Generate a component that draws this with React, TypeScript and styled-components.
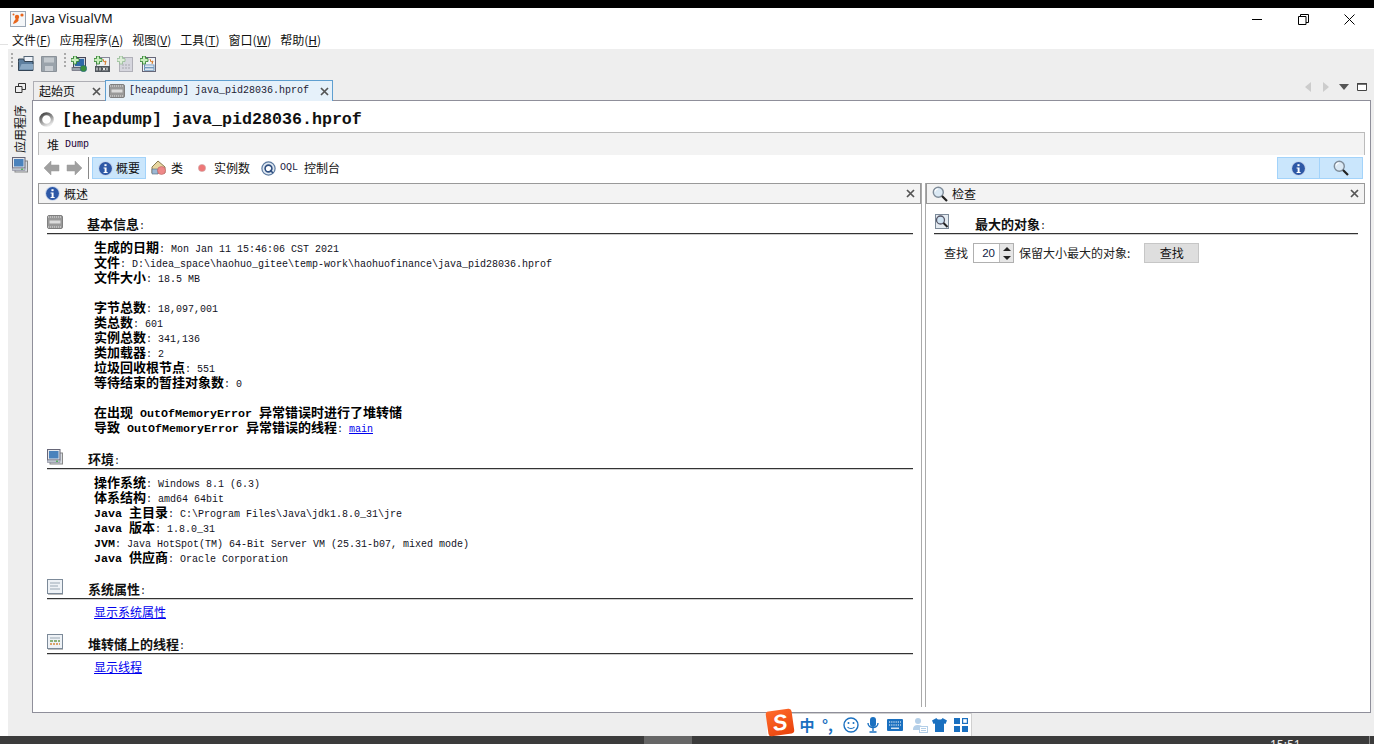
import React from "react";
import styled, { createGlobalStyle } from "styled-components";

const Global = createGlobalStyle`
  html, body { margin: 0; padding: 0; background: #fff; }
  body { font-family: "Noto Sans CJK SC", "Noto Sans", sans-serif; color: #000; }
  * { box-sizing: border-box; }
`;

const CJK = `"Noto Sans CJK SC", "Noto Sans", sans-serif`;
const MONO = `"Liberation Mono", "Noto Sans CJK SC", monospace`;

const Screen = styled.div`
  width: 1374px; height: 744px; position: relative; overflow: hidden;
  display: flex; flex-direction: column; background: #fff;
`;
const TopBlack = styled.div`height: 8px; background: #000; flex: none;`;
const Middle = styled.div`flex: 1; display: flex; min-height: 0;`;
const Gutter = styled.div`
  width: 8px; flex: none;
  background: linear-gradient(#fff 36px, #e2e2e2 36px, #e2e2e2 37px, #fff 37px);
`;
const AppCol = styled.div`flex: 1; display: flex; flex-direction: column; min-width: 0;`;

const TitleBar = styled.div`
  height: 22px; flex: none; background: #fff; display: flex; align-items: center;
  padding-left: 2px;
`;
const TitleText = styled.span`
  font: 12.6px "Noto Sans", sans-serif; margin-left: 5px; color: #111; line-height: 20px; letter-spacing: 0.05px;
`;
const WinButtons = styled.div`
  margin-left: auto; display: flex; gap: 35px; padding-right: 19px; align-items: center;
`;
const MenuBar = styled.div`
  height: 19px; flex: none; background: #fff; display: flex; gap: 9px; padding-left: 4px; align-items: center;
  font: 12px/19px ${CJK}; color: #111;
`;
const Mnemonic = styled.span`text-decoration: underline;`;
const Toolbar = styled.div`
  height: 31px; flex: none; background: #eee; display: flex; align-items: flex-start; padding: 4px 0 0 3px;
`;
const Grip = styled.div<{ $ml?: number }>`
  width: 2px; height: 16px; margin-left: ${(p) => p.$ml ?? 0}px;
  background: repeating-linear-gradient(#aaa 0 2px, transparent 2px 4px);
`;
const ToolIcon = styled.div<{ $ml: number }>`
  width: 16px; height: 16px; margin-left: ${(p) => p.$ml}px; flex: none;
`;

const Workspace = styled.div`
  flex: 1; display: flex; min-height: 0; background: #eee; padding: 0 3px 23px 0;
`;
const Sidebar = styled.div`
  width: 24px; flex: none; display: flex; flex-direction: column; align-items: center; padding-top: 3px;
`;
const SideLabel = styled.div`
  writing-mode: vertical-rl; text-orientation: sideways; transform: rotate(180deg);
  font: 12px/14px ${CJK}; margin-top: 10px; height: 50px; color: #111;
`;
const SideIcon = styled.div`margin-top: 1px; height: 16px;`;

const MainCol = styled.div`flex: 1; display: flex; flex-direction: column; min-width: 0;`;
const TabStrip = styled.div`height: 20px; flex: none; display: flex; align-items: flex-end; position: relative; z-index: 1;`;
const Tab = styled.div<{ $active?: boolean; $w: number }>`
  width: ${(p) => p.$w}px; height: ${(p) => (p.$active ? 21 : 19)}px;
  margin-bottom: ${(p) => (p.$active ? -1 : 0)}px;
  margin-left: ${(p) => (p.$active ? 0 : 1)}px;
  display: flex; align-items: center; flex: none;
  background: ${(p) => (p.$active ? "#e6f1fa" : "#eee")};
  border: 1px solid ${(p) => (p.$active ? "#5f9fd0" : "#aeaeb4")};
  border-bottom: ${(p) => (p.$active ? "none" : "0")};
  border-right: ${(p) => (p.$active ? "" : "none")};
  padding-left: ${(p) => (p.$active ? 3 : 5)}px;
`;
const TabCJK = styled.span`font: 12px/18px ${CJK}; color: #111;`;
const TabMono = styled.span`font: 10px/18px ${MONO}; margin-left: 4px; color: #223; white-space: pre;`;
const TabClose = styled.div<{ $mr: number }>`margin-left: auto; margin-right: ${(p) => p.$mr}px; width: 9px; height: 9px; display: flex;`;
const StripControls = styled.div`
  margin-left: auto; display: flex; align-items: center; height: 20px; padding-bottom: 7px;
`;
const Frame = styled.div`
  flex: 1; min-height: 0; background: #fff; border: 1px solid #8f8f9a;
  padding: 0 5px 5px; display: flex; flex-direction: column;
`;
const DocTitle = styled.div`
  height: 31px; flex: none; display: flex; align-items: center; padding: 6px 0 0 1px;
`;
const DocTitleText = styled.span`
  font: bold 16.67px/24px ${MONO}; margin-left: 8px; white-space: pre; color: #111;
`;
const SubBar = styled.div`
  height: 23px; flex: none; background: #f3f3f3; border: 1px solid #bbb; border-bottom: none;
  display: flex; align-items: center; padding: 1px 0 0 8px;
`;
const SubCJK = styled.span`font: 12px/20px ${CJK}; color: #111;`;
const SubMono = styled.span`font: 10px/20px ${MONO}; margin-left: 6px; color: #203;`;
const ViewBar = styled.div`
  height: 27px; flex: none; display: flex; align-items: flex-start; padding: 2px 2px 0 5px; background: #fff;
`;
const NavItem = styled.div<{ $ml?: number; $on?: boolean }>`
  height: 22px; display: flex; align-items: center; flex: none; margin-left: ${(p) => p.$ml ?? 0}px;
  ${(p) => p.$on ? "background:#cae6fc; border:1px solid #a3d3fa; padding:0 5px;" : ""}
`;
const NavSep = styled.div`width: 1px; height: 22px; background: #888; margin-left: 5px;`;
const NavText = styled.span<{ $ml?: number }>`
  font: 12px/22px ${CJK}; margin-left: ${(p) => p.$ml ?? 4}px; color: #111; white-space: pre;
`;
const NavMono = styled.span`font: 10px/22px ${MONO}; margin-left: 4px; color: #224;`;
const RightGroup = styled.div`margin-left: auto; display: flex;`;
const ToggleBtn = styled.div`
  width: 43px; height: 22px; background: #cae6fc; border: 1px solid #a3d3fa;
  display: flex; align-items: center; justify-content: center;
  & + & { border-left: none; }
`;
const Panels = styled.div`flex: 1; min-height: 0; display: flex; gap: 3px; padding-top: 1px;`;
const Panel = styled.div<{ $w: number; $side: "left" | "right" }>`
  width: ${(p) => p.$w}px; flex: none; display: flex; flex-direction: column;
  ${(p) => p.$side === "left" ? "border-right:1px solid #aaa;" : "border-left:1px solid #aaa;"}
`;
const PanelHead = styled.div<{ $pl: number }>`
  height: 21px; flex: none; display: flex; align-items: center; background: #f3f3f3;
  border: 1px solid #999; padding-left: ${(p) => p.$pl}px; padding-right: 5px;
`;
const PanelTitle = styled.span`font: 12px/18px ${CJK}; margin-left: 4px; color: #111;`;
const PanelClose = styled.div`margin-left: auto; display: flex;`;
const PanelBody = styled.div<{ $pl: number; $pr: number }>`
  flex: 1; padding: 10px ${(p) => p.$pr}px 0 ${(p) => p.$pl}px;
  display: flex; flex-direction: column; gap: 13px;
`;
const Section = styled.section``;
const SectionHead = styled.div<{ $gap: number }>`
  height: 20px; display: flex; border-bottom: 1px solid #333; box-shadow: 0 1px 0 #d0d0d0; align-items: flex-start;
  & > svg { flex: none; margin-right: ${(p) => p.$gap}px; }
`;
const HeadText = styled.span`
  font: bold 13px/20px ${CJK}; color: #111; white-space: pre;
`;
const HeadColon = styled.span`font: 10px/20px ${MONO};`;
const SectionBody = styled.div`padding: 5px 0 2px 47px;`;
const Line = styled.div`
  height: 15px; font: 10px/15px ${MONO}; white-space: pre; color: #112;
  &::before { content: "\\200b"; font: bold 13px/15px ${CJK}; }
`;
const Cjk = styled.b`display: inline-block; height: 15px; font: bold 13px/15px ${CJK}; color: #000;`;
const Bl = styled.b`display: inline-block; height: 15px; font: bold 11.67px/15px ${MONO}; color: #000;`;
const Link = styled.a`color: #00e; text-decoration: underline; cursor: pointer;`;
const LinkCjk = styled.span`font: 12px/15px ${CJK};`;
const FindRow = styled.div`
  display: flex; align-items: center; height: 20px; margin-top: 9px; padding-left: 10px;
  font: 12px/20px ${CJK}; color: #222; white-space: pre;
`;
const SpinBox = styled.div`
  width: 41px; height: 20px; margin: 0 5px; border: 1px solid #b0b0b0; background: #fff;
  display: flex; align-items: center; justify-content: flex-end;
`;
const SpinVal = styled.span`font: 11.5px/18px "Liberation Sans", sans-serif; color: #124; margin-right: 4px;`;
const SpinArrows = styled.div`
  width: 14px; height: 18px; background: #e6e6e6; display: flex; flex-direction: column; align-items: center;
  justify-content: space-around; border-left: 1px solid #bbb;
`;
const FindBtn = styled.div`
  width: 55px; height: 20px; margin-left: 14px; background: #dedede; border: 1px solid #c6c6c6;
  text-align: center; font: 12px/18px ${CJK}; color: #111;
`;

const ImeBar = styled.div`
  position: absolute; left: 767px; top: 713px; width: 205px; height: 23px; background: #fff;
  border: 1px solid #d0d0d0; border-left: none; border-bottom: none;
  display: flex; align-items: center; padding-left: 29px;
`;
const ImeLogo = styled.div`
  position: absolute; left: 0; top: -4px; width: 26px; height: 25px; background: linear-gradient(160deg,#ff6a2a,#e8420c);
  border-radius: 3px; transform: rotate(-8deg); color: #fff; text-align: center;
  font: italic 900 22px/25px "Liberation Sans", sans-serif;
`;
const ImeText = styled.span<{ $w: number }>`
  width: ${(p) => p.$w}px; flex: none; text-align: center; color: #1a70c0; font: bold 15px/20px ${CJK};
`;
const ImeIcon = styled.div<{ $w: number }>`
  width: ${(p) => p.$w}px; flex: none; display: flex; justify-content: center; align-items: center;
`;

const Taskbar = styled.div`
  height: 8px; flex: none; background: #3b3b3b; display: flex; overflow: hidden;
`;
const TaskHi = styled.div`width: 48px; background: #666; margin-left: 644px;`;
const Clock = styled.div`
  margin-left: 578px; font: 12px/12px "Noto Sans", sans-serif; color: #eee; padding-top: 3px; width: 100px; height: 8px;
  border-right: 1px solid #888;
`;

const Info = ({ s = 14 }: { s?: number }) => (
  <svg width={s} height={s} viewBox="0 0 14 14">
    <circle cx="7" cy="7" r="6.8" fill="#c4d2ea" />
    <circle cx="7" cy="7" r="6" fill="#2d58a6" />
    <rect x="6" y="3" width="2" height="1.8" fill="#fff" />
    <path d="M5.2 6h2.8v4.2h1v1H5.2v-1h1V7H5.2z" fill="#fff" />
  </svg>
);
const Mag = ({ s = 16 }: { s?: number }) => (
  <svg width={s} height={s} viewBox="0 0 16 16">
    <circle cx="6.3" cy="6.3" r="5" fill="#dbe9f4" stroke="#7f8c99" strokeWidth="1.4" />
    <path d="M2.8 5.5a3.6 3.6 0 0 1 3-2.6" stroke="#fff" strokeWidth="1.2" fill="none" />
    <path d="M10 10l5 5" stroke="#222" strokeWidth="2.2" />
  </svg>
);
const Close = ({ c = "#555", s = 9 }: { c?: string; s?: number }) => (
  <svg width={s} height={s} viewBox="0 0 9 9"><path d="M1 1l7 7M8 1L1 8" stroke={c} strokeWidth="1.7" /></svg>
);
const Chip = ({ s = 16 }: { s?: number }) => (
  <svg width={s} height={s} viewBox="0 0 16 16">
    <rect x="0.5" y="1.5" width="15" height="13" rx="1.5" fill="#999" stroke="#808080" />
    <path d="M1 3h14" stroke="#e4e4e4" strokeDasharray="1 1" />
    <path d="M1 13h14" stroke="#e4e4e4" strokeDasharray="1 1" />
    <rect x="2.5" y="6.5" width="11" height="3" fill="#dcdcdc" />
  </svg>
);
const Monitor = ({ s = 16 }: { s?: number }) => (
  <svg width={s} height={s} viewBox="0 0 16 16">
    <rect x="3" y="4" width="12.5" height="11" fill="#d8dde2" stroke="#888" />
    <rect x="0.5" y="0.5" width="12.5" height="10.5" fill="#e4e7ec" stroke="#667" />
    <rect x="2" y="2" width="9.5" height="7.5" fill="#4a82bc" />
    <rect x="0.5" y="11" width="12.5" height="2.5" fill="#bcc4cc" stroke="#889" strokeWidth=".6" />
    <rect x="9" y="11.7" width="2" height="1" fill="#3a3" />
  </svg>
);
const DocLines = () => (
  <svg width="16" height="16" viewBox="0 0 16 16">
    <rect x=".5" y=".5" width="15" height="14" fill="#eef2f6" stroke="#7c8a99" />
    <path d="M3 4h10M3 7h8M3 10h10" stroke="#9aa8b4" />
    <path d="M1 15.5h15" stroke="#bbb" />
  </svg>
);
const Threads = () => (
  <svg width="16" height="16" viewBox="0 0 16 16">
    <rect x=".5" y=".5" width="15" height="14" fill="#eef2f6" stroke="#7c8a99" />
    <path d="M3 4h10" stroke="#9aa8b4" />
    <path d="M3 7h10" stroke="#6a9a4c" strokeWidth="1.4" strokeDasharray="3 1" />
    <path d="M3 10h10" stroke="#d68a3c" strokeWidth="1.4" strokeDasharray="2 1" />
    <path d="M1 15.5h15" stroke="#bbb" />
  </svg>
);
const MagDoc = () => (
  <svg width="16" height="16" viewBox="0 0 16 16">
    <rect x="1.5" y=".5" width="13" height="14" fill="#e4ebf1" stroke="#7c8a99" />
    <circle cx="6.5" cy="6" r="4" fill="#cfe3f2" stroke="#556" strokeWidth="1.3" />
    <path d="M9.5 9l4 4" stroke="#222" strokeWidth="2" />
  </svg>
);
const Plus = () => (
  <path d="M2.5 0h3v2.5H8v3H5.5V8h-3V5.5H0v-3h2.5z" fill="#c9efbd" stroke="#2a7d2a" strokeWidth=".8" />
);
const T = {
  Open: () => (
    <svg width="16" height="16" viewBox="0 0 16 16">
      <rect x="6" y="0.5" width="9" height="7" fill="#eef2f8" stroke="#567" />
      <path d="M.5 5.5V3h5l1 2.5h8.5v9H.5z" fill="#5d7f9f" stroke="#345" />
      <path d="M1.5 13l2-5h11.5v5.5H1.5z" fill="#8ba9c4" />
    </svg>
  ),
  Save: () => (
    <svg width="16" height="16" viewBox="0 0 16 16">
      <path d="M.5.5h15v15H.5z" fill="#9aa3ab" stroke="#8a9198" />
      <rect x="3" y="1.5" width="10" height="5" fill="#c3c9ce" />
      <rect x="4" y="10" width="8" height="5" fill="#c8cdd2" />
    </svg>
  ),
  App: () => (
    <svg width="16" height="16" viewBox="0 0 16 16">
      <rect x="2.5" y="1.5" width="12" height="10" fill="#c8d2dc" stroke="#445" />
      <rect x="4" y="3" width="9" height="7" fill="#2f6aa8" />
      <rect x="1" y="11.5" width="12" height="3" fill="#9aa3ab" stroke="#556" strokeWidth=".6" />
      <circle cx="12.5" cy="12.5" r="3.2" fill="#3a8f3c" stroke="#1f5f8f" strokeWidth=".6" />
      <Plus />
    </svg>
  ),
  Jmx: () => (
    <svg width="16" height="16" viewBox="0 0 16 16">
      <rect x="2.5" y="1.5" width="13" height="14" fill="#eef1f4" stroke="#889" />
      <path d="M9 3l1 3 2-1-1 4" stroke="#d77a2a" fill="none" />
      <rect x="1" y="10" width="15" height="6" fill="#4f555b" />
      <path d="M3 11.5v3M6 11.5v3M9 11.5l2 3M11 11.5l-2 3M13 11.5v3" stroke="#fff" strokeWidth="1" />
      <Plus />
    </svg>
  ),
  Core: () => (
    <svg width="16" height="16" viewBox="0 0 16 16" opacity=".45">
      <rect x="2.5" y="1.5" width="13" height="14" fill="#bbc" stroke="#667" />
      <path d="M5 9h8M5 12h8" stroke="#556" strokeDasharray="2 1" />
      <Plus />
    </svg>
  ),
  Snap: () => (
    <svg width="16" height="16" viewBox="0 0 16 16">
      <rect x="2.5" y="1.5" width="13" height="14" fill="#f0f3f6" stroke="#667" />
      <path d="M10 3l1 3 2-1-1 3" stroke="#d77a2a" fill="none" />
      <rect x="4.5" y="9" width="9.5" height="2.2" fill="#fff" stroke="#4f7fae" strokeWidth=".8" />
      <rect x="4.5" y="12" width="9.5" height="2.2" fill="#fff" stroke="#4f7fae" strokeWidth=".8" />
      <Plus />
    </svg>
  ),
};

const Tri = ({ d, c, w = 6, h = 10 }: { d: "l" | "r" | "d"; c: string; w?: number; h?: number }) => (
  <svg width={w} height={h} viewBox={`0 0 ${w} ${h}`}>
    <path d={d === "l" ? `M${w} 0V${h}L0 ${h / 2}z` : d === "r" ? `M0 0V${h}L${w} ${h / 2}z` : `M0 0H${w}L${w / 2} ${h}z`} fill={c} />
  </svg>
);
const StripSlot = styled.div<{ $w: number }>`width: ${(p) => p.$w}px; display: flex; justify-content: center; flex: none;`;

const SpinnerIcon = () => (
  <svg width="15" height="15" viewBox="0 0 15 15">
    <defs>
      <linearGradient id="sp" x1="0.2" y1="0" x2="0.7" y2="1">
        <stop offset="0" stopColor="#4c4c4c" />
        <stop offset=".6" stopColor="#a5a5a5" />
        <stop offset="1" stopColor="#e8e8e8" />
      </linearGradient>
    </defs>
    <circle cx="7.5" cy="7.5" r="5.8" fill="none" stroke="url(#sp)" strokeWidth="3" />
  </svg>
);

const NavArrow = ({ flip }: { flip?: boolean }) => (
  <svg width="17" height="16" viewBox="0 0 17 16" style={flip ? { transform: "scaleX(-1)" } : undefined}>
    <path d="M8 1L1 8l7 7v-4h8V5H8z" fill="#a0a0a0" stroke="#999" strokeWidth=".5" />
  </svg>
);

const JavaLogo = () => (
  <svg width="16" height="16" viewBox="0 0 16 16">
    <rect x=".5" y=".5" width="15" height="15" fill="#f4f6f8" stroke="#9aa6b4" />
    <path d="M3 13c1-4 3-6 5-5s-1 4-5 5z" fill="#e8661e" />
    <circle cx="7" cy="6" r="2.2" fill="#e8661e" />
    <circle cx="12" cy="4" r="1.6" fill="#e8661e" />
    <circle cx="3.5" cy="3.5" r="1" fill="#e8661e" />
  </svg>
);

const menu: [string, string][] = [["文件", "F"], ["应用程序", "A"], ["视图", "V"], ["工具", "T"], ["窗口", "W"], ["帮助", "H"]];

export default function App() {
  return (
    <Screen>
      <Global />
      <TopBlack />
      <Middle>
        <Gutter />
        <AppCol>
          <TitleBar>
            <JavaLogo />
            <TitleText>Java VisualVM</TitleText>
            <WinButtons>
              <svg width="11" height="11" viewBox="0 0 11 11"><path d="M0 5.5h10" stroke="#000" /></svg>
              <svg width="11" height="11" viewBox="0 0 11 11"><path d="M.5 2.5h7.5v8H.5zM2.5 2.5v-2h8v8h-2.5" fill="none" stroke="#000" /></svg>
              <svg width="11" height="11" viewBox="0 0 11 11"><path d="M.5.5l10 10M10.5.5l-10 10" stroke="#000" /></svg>
            </WinButtons>
          </TitleBar>
          <MenuBar>
            {menu.map(([a, b]) => (
              <span key={b}>{a}(<Mnemonic>{b}</Mnemonic>)</span>
            ))}
          </MenuBar>
          <Toolbar>
            <Grip />
            <ToolIcon $ml={5}><T.Open /></ToolIcon>
            <ToolIcon $ml={7}><T.Save /></ToolIcon>
            <Grip $ml={7} />
            <ToolIcon $ml={5}><T.App /></ToolIcon>
            <ToolIcon $ml={7}><T.Jmx /></ToolIcon>
            <ToolIcon $ml={7}><T.Core /></ToolIcon>
            <ToolIcon $ml={7}><T.Snap /></ToolIcon>
          </Toolbar>
          <Workspace>
            <Sidebar>
              <svg width="11" height="10" viewBox="0 0 11 10"><path d="M.5 3.5h6.5v6H.5zM3.5 3.5v-3h7v6h-3.5" fill="none" stroke="#333" /></svg>
              <SideLabel>应用程序</SideLabel>
              <SideIcon><Monitor /></SideIcon>
            </Sidebar>
            <MainCol>
              <TabStrip>
                <Tab $w={72}>
                  <TabCJK>起始页</TabCJK>
                  <TabClose $mr={4}><Close /></TabClose>
                </Tab>
                <Tab $active $w={228}>
                  <Chip />
                  <TabMono>[heapdump] java_pid28036.hprof</TabMono>
                  <TabClose $mr={3}><Close /></TabClose>
                </Tab>
                <StripControls>
                  <StripSlot $w={18}><Tri d="l" c="#ccc" /></StripSlot>
                  <StripSlot $w={18}><Tri d="r" c="#ccc" /></StripSlot>
                  <StripSlot $w={18}><Tri d="d" c="#555" w={10} h={6} /></StripSlot>
                  <StripSlot $w={18}>
                    <svg width="10" height="8" viewBox="0 0 10 8"><path d="M.5 .5h9v7h-9z" fill="#fff" stroke="#444" /><path d="M0 1h10" stroke="#444" strokeWidth="1.5" /></svg>
                  </StripSlot>
                </StripControls>
              </TabStrip>
              <Frame>
                <DocTitle>
                  <SpinnerIcon />
                  <DocTitleText>[heapdump] java_pid28036.hprof</DocTitleText>
                </DocTitle>
                <SubBar>
                  <SubCJK>堆</SubCJK>
                  <SubMono>Dump</SubMono>
                </SubBar>
                <ViewBar>
                  <NavItem><NavArrow /></NavItem>
                  <NavItem $ml={6}><NavArrow flip /></NavItem>
                  <NavSep />
                  <NavItem $on $ml={3}><Info s={15} /><NavText $ml={3}>概要</NavText></NavItem>
                  <NavItem $ml={5}>
                    <svg width="16" height="16" viewBox="0 0 16 16">
                      <path d="M1 7l6-6 7 6v6H1z" fill="#e8d6a0" stroke="#8a7a50" />
                      <path d="M1 9h6v5H1z" fill="#9bb8d4" stroke="#567" strokeWidth=".6" />
                      <circle cx="10.5" cy="10.5" r="4" fill="#e88" stroke="#b66" strokeWidth=".6" />
                    </svg>
                    <NavText>类</NavText>
                  </NavItem>
                  <NavItem $ml={15}>
                    <svg width="8" height="8" viewBox="0 0 8 8"><circle cx="4" cy="4" r="3.6" fill="#e77" stroke="#caa" strokeWidth=".6" /></svg>
                    <NavText $ml={8}>实例数</NavText>
                  </NavItem>
                  <NavItem $ml={11}>
                    <svg width="15" height="15" viewBox="0 0 15 15">
                      <circle cx="7.5" cy="7.5" r="6.6" fill="#dfe8f2" stroke="#5c7aa0" strokeWidth="1.2" />
                      <circle cx="7.5" cy="7.5" r="3.4" fill="#fff" stroke="#2f4f80" strokeWidth="1.6" />
                      <path d="M9 9l3 3" stroke="#2f4f80" strokeWidth="1.6" />
                    </svg>
                    <NavMono>OQL</NavMono>
                    <NavText $ml={6}>控制台</NavText>
                  </NavItem>
                  <RightGroup>
                    <ToggleBtn><Info s={15} /></ToggleBtn>
                    <ToggleBtn><Mag /></ToggleBtn>
                  </RightGroup>
                </ViewBar>
                <Panels>
                  <Panel $w={884} $side="left">
                    <PanelHead $pl={6}>
                      <Info s={15} />
                      <PanelTitle>概述</PanelTitle>
                      <PanelClose><Close /></PanelClose>
                    </PanelHead>
                    <PanelBody $pl={9} $pr={8}>
                      <Section>
                        <SectionHead $gap={24}><Chip /><HeadText>基本信息<HeadColon>:</HeadColon></HeadText></SectionHead>
                        <SectionBody>
                          <Line><Cjk>生成的日期</Cjk>: Mon Jan 11 15:46:06 CST 2021</Line>
                          <Line><Cjk>文件</Cjk>: D:\idea_space\haohuo_gitee\temp-work\haohuofinance\java_pid28036.hprof</Line>
                          <Line><Cjk>文件大小</Cjk>: 18.5 MB</Line>
                          <Line />
                          <Line><Cjk>字节总数</Cjk>: 18,097,001</Line>
                          <Line><Cjk>类总数</Cjk>: 601</Line>
                          <Line><Cjk>实例总数</Cjk>: 341,136</Line>
                          <Line><Cjk>类加载器</Cjk>: 2</Line>
                          <Line><Cjk>垃圾回收根节点</Cjk>: 551</Line>
                          <Line><Cjk>等待结束的暂挂对象数</Cjk>: 0</Line>
                          <Line />
                          <Line><Cjk>在出现</Cjk><Bl> OutOfMemoryError </Bl><Cjk>异常错误时进行了堆转储</Cjk></Line>
                          <Line><Cjk>导致</Cjk><Bl> OutOfMemoryError </Bl><Cjk>异常错误的线程</Cjk>: <Link>main</Link></Line>
                        </SectionBody>
                      </Section>
                      <Section>
                        <SectionHead $gap={25}><Monitor /><HeadText>环境<HeadColon>:</HeadColon></HeadText></SectionHead>
                        <SectionBody>
                          <Line><Cjk>操作系统</Cjk>: Windows 8.1 (6.3)</Line>
                          <Line><Cjk>体系结构</Cjk>: amd64 64bit</Line>
                          <Line><Bl>Java </Bl><Cjk>主目录</Cjk>: C:\Program Files\Java\jdk1.8.0_31\jre</Line>
                          <Line><Bl>Java </Bl><Cjk>版本</Cjk>: 1.8.0_31</Line>
                          <Line><Bl>JVM</Bl>: Java HotSpot(TM) 64-Bit Server VM (25.31-b07, mixed mode)</Line>
                          <Line><Bl>Java </Bl><Cjk>供应商</Cjk>: Oracle Corporation</Line>
                        </SectionBody>
                      </Section>
                      <Section>
                        <SectionHead $gap={25}><DocLines /><HeadText>系统属性<HeadColon>:</HeadColon></HeadText></SectionHead>
                        <SectionBody>
                          <Line><Link><LinkCjk>显示系统属性</LinkCjk></Link></Line>
                        </SectionBody>
                      </Section>
                      <Section>
                        <SectionHead $gap={25}><Threads /><HeadText>堆转储上的线程<HeadColon>:</HeadColon></HeadText></SectionHead>
                        <SectionBody>
                          <Line><Link><LinkCjk>显示线程</LinkCjk></Link></Line>
                        </SectionBody>
                      </Section>
                    </PanelBody>
                  </Panel>
                  <Panel $w={440} $side="right">
                    <PanelHead $pl={5}>
                      <Mag />
                      <PanelTitle>检查</PanelTitle>
                      <PanelClose><Close /></PanelClose>
                    </PanelHead>
                    <PanelBody $pl={8} $pr={7}>
                      <Section>
                        <SectionHead $gap={25}><MagDoc /><HeadText>最大的对象<HeadColon>:</HeadColon></HeadText></SectionHead>
                        <FindRow>
                          查找
                          <SpinBox>
                            <SpinVal>20</SpinVal>
                            <SpinArrows>
                              <svg width="8" height="4" viewBox="0 0 8 4"><path d="M0 4h8L4 0z" fill="#222" /></svg>
                              <svg width="8" height="4" viewBox="0 0 8 4"><path d="M0 0h8L4 4z" fill="#222" /></svg>
                            </SpinArrows>
                          </SpinBox>
                          保留大小最大的对象:
                          <FindBtn>查找</FindBtn>
                        </FindRow>
                      </Section>
                    </PanelBody>
                  </Panel>
                </Panels>
              </Frame>
            </MainCol>
          </Workspace>
        </AppCol>
      </Middle>
      <Taskbar>
        <TaskHi />
        <Clock>15:51</Clock>
      </Taskbar>
      <ImeBar>
        <ImeLogo>S</ImeLogo>
        <ImeText $w={22}>中</ImeText>
        <ImeText $w={19}>°,</ImeText>
        <ImeIcon $w={28}>
          <svg width="16" height="16" viewBox="0 0 16 16"><circle cx="8" cy="8" r="7" fill="none" stroke="#1a70c0" strokeWidth="1.4" /><circle cx="5.5" cy="6" r="1" fill="#1a70c0" /><circle cx="10.5" cy="6" r="1" fill="#1a70c0" /><path d="M4.5 10c1.5 2 5.5 2 7 0" fill="none" stroke="#1a70c0" strokeWidth="1.2" /></svg>
        </ImeIcon>
        <ImeIcon $w={16}>
          <svg width="12" height="16" viewBox="0 0 12 16"><rect x="3" y="0" width="6" height="10" rx="3" fill="#1a70c0" /><path d="M1 6c0 6 10 6 10 0M6 11v3M2.5 15h7" fill="none" stroke="#1a70c0" strokeWidth="1.4" /></svg>
        </ImeIcon>
        <ImeIcon $w={28}>
          <svg width="16" height="12" viewBox="0 0 16 12"><rect width="16" height="12" rx="1" fill="#1a70c0" /><path d="M2 3h12M2 6h12" stroke="#fff" strokeWidth="1.2" strokeDasharray="1.2 1" /><path d="M4 9.2h8" stroke="#fff" strokeWidth="1.2" /></svg>
        </ImeIcon>
        <ImeIcon $w={21}>
          <svg width="16" height="16" viewBox="0 0 16 16"><circle cx="6" cy="4" r="3" fill="#b4cfe8" /><path d="M1 13c0-4 2-5 5-5s4 1 5 2H7v3z" fill="#b4cfe8" /><rect x="7.5" y="9.5" width="8" height="6" fill="#fff" stroke="#b4cfe8" /><path d="M9 11.5h5M9 13.5h5" stroke="#b4cfe8" /></svg>
        </ImeIcon>
        <ImeIcon $w={18}>
          <svg width="15" height="14" viewBox="0 0 15 14"><path d="M4.5 0L0 2.5 1.5 6 3 5.5V14h9V5.5L13.5 6 15 2.5 10.5 0c-.5 2-5.5 2-6 0z" fill="#1a70c0" /></svg>
        </ImeIcon>
        <ImeIcon $w={25}>
          <svg width="14" height="14" viewBox="0 0 14 14"><rect width="6" height="6" fill="#1a70c0" /><rect x="8.6" y=".6" width="4.8" height="4.8" fill="none" stroke="#1a70c0" strokeWidth="1.2" /><rect y="8" width="6" height="6" fill="#1a70c0" /><rect x="8" y="8" width="6" height="6" fill="#1a70c0" /></svg>
        </ImeIcon>
      </ImeBar>
    </Screen>
  );
}
